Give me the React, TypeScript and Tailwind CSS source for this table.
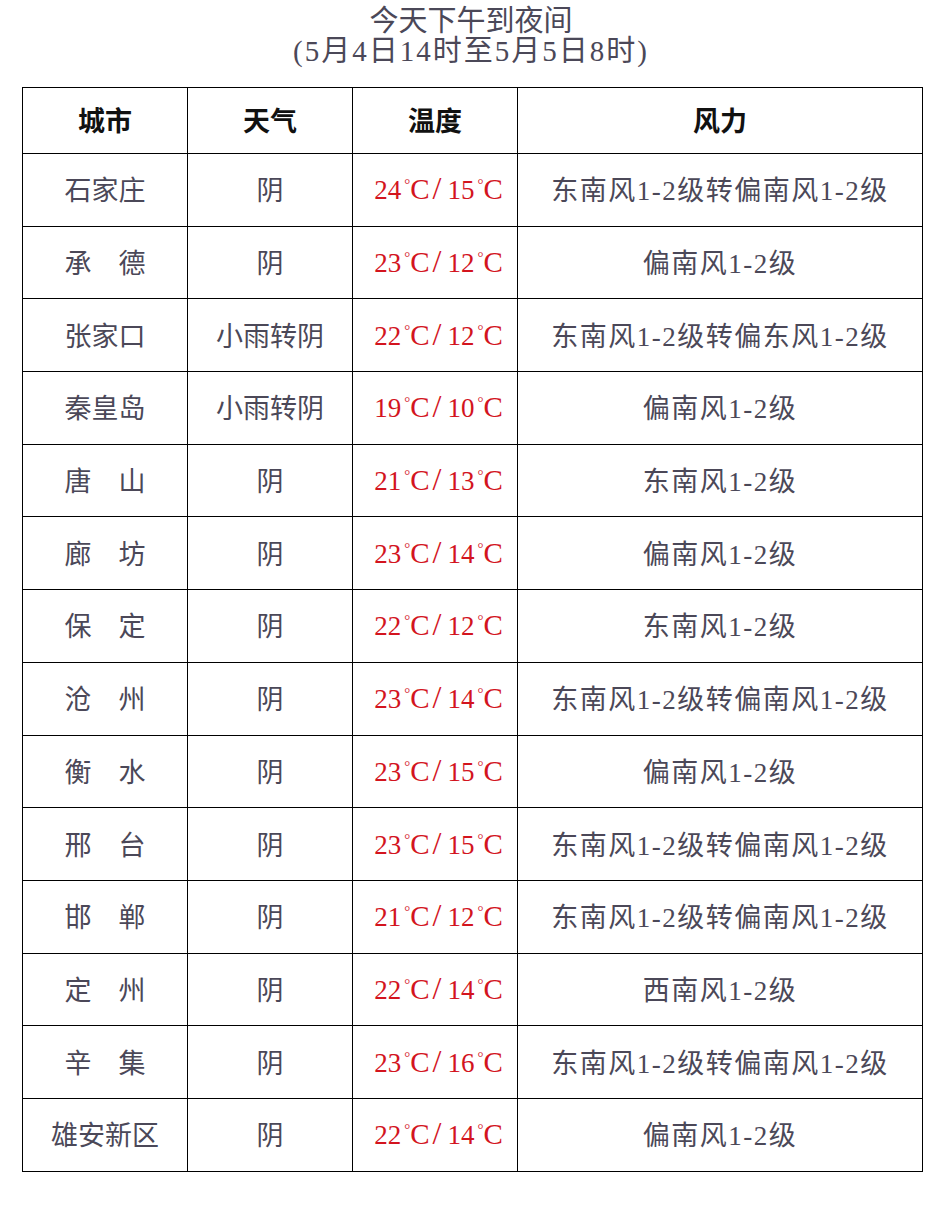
const ROWS: [string, string, [number, number], string][] = [
  ['石家庄', '阴', [24, 15], '东南风1-2级转偏南风1-2级'],
  ['承　德', '阴', [23, 12], '偏南风1-2级'],
  ['张家口', '小雨转阴', [22, 12], '东南风1-2级转偏东风1-2级'],
  ['秦皇岛', '小雨转阴', [19, 10], '偏南风1-2级'],
  ['唐　山', '阴', [21, 13], '东南风1-2级'],
  ['廊　坊', '阴', [23, 14], '偏南风1-2级'],
  ['保　定', '阴', [22, 12], '东南风1-2级'],
  ['沧　州', '阴', [23, 14], '东南风1-2级转偏南风1-2级'],
  ['衡　水', '阴', [23, 15], '偏南风1-2级'],
  ['邢　台', '阴', [23, 15], '东南风1-2级转偏南风1-2级'],
  ['邯　郸', '阴', [21, 12], '东南风1-2级转偏南风1-2级'],
  ['定　州', '阴', [22, 14], '西南风1-2级'],
  ['辛　集', '阴', [23, 16], '东南风1-2级转偏南风1-2级'],
  ['雄安新区', '阴', [22, 14], '偏南风1-2级'],
];

const FONT = "font-['Liberation_Serif','Noto_Sans_CJK_SC',serif]";

// full-width degree Celsius sign, like the SimSun glyph in the picture
function Celsius() {
  return (
    <span className="whitespace-nowrap pl-[3px] pr-[3px]">
      <span className="relative -top-[10px] text-[15px]">°</span>
      <span className="text-[29px]">C</span>
    </span>
  );
}

function Temp({ hi, lo }: { hi: number; lo: number }) {
  return (
    <span className="whitespace-nowrap">
      {hi}
      <Celsius />
      <span className="text-[32px] pr-[6px]">/</span>
      {lo}
      <Celsius />
    </span>
  );
}

export default function App() {
  return (
    <div className={`w-[942px] h-[1218px] bg-white ${FONT}`}>
      <div className="pt-[6px] text-center text-[29px] leading-[30px] text-[#4b4858]">
        <div>今天下午到夜间</div>
        <div className="tracking-[2px]">(5月4日14时至5月5日8时)</div>
      </div>

      <table className="mt-[21px] ml-[22px] w-[901px] border-collapse table-fixed">
        <colgroup>
          <col className="w-[165px]" />
          <col className="w-[165px]" />
          <col className="w-[165px]" />
          <col />
        </colgroup>
        <thead>
          <tr className="h-[66px]">
            {['城市', '天气', '温度', '风力'].map(h => (
              <th key={h} className="border-[1.5px] border-black pt-[4px] text-[27px] font-semibold text-[#111] text-center">
                {h}
              </th>
            ))}
          </tr>
        </thead>
        <tbody>
          {ROWS.map(([city, weather, [hi, lo], wind]) => (
            <tr key={city} className="h-[72.7px]">
              <td className="border-[1.5px] border-black pt-[3px] text-center text-[27px] leading-[36px] text-[#4b4858]">{city}</td>
              <td className="border-[1.5px] border-black pt-[3px] text-center text-[27px] leading-[36px] text-[#4b4858]">{weather}</td>
              <td className="border-[1.5px] border-black pt-[3px] text-center text-[27px] leading-[36px] text-[#d3141e] pl-[10px]">
                <Temp hi={hi} lo={lo} />
              </td>
              <td className="border-[1.5px] border-black pt-[3px] text-center text-[27px] leading-[36px] tracking-[1.5px] text-[#4b4858]">{wind}</td>
            </tr>
          ))}
        </tbody>
      </table>
    </div>
  );
}
